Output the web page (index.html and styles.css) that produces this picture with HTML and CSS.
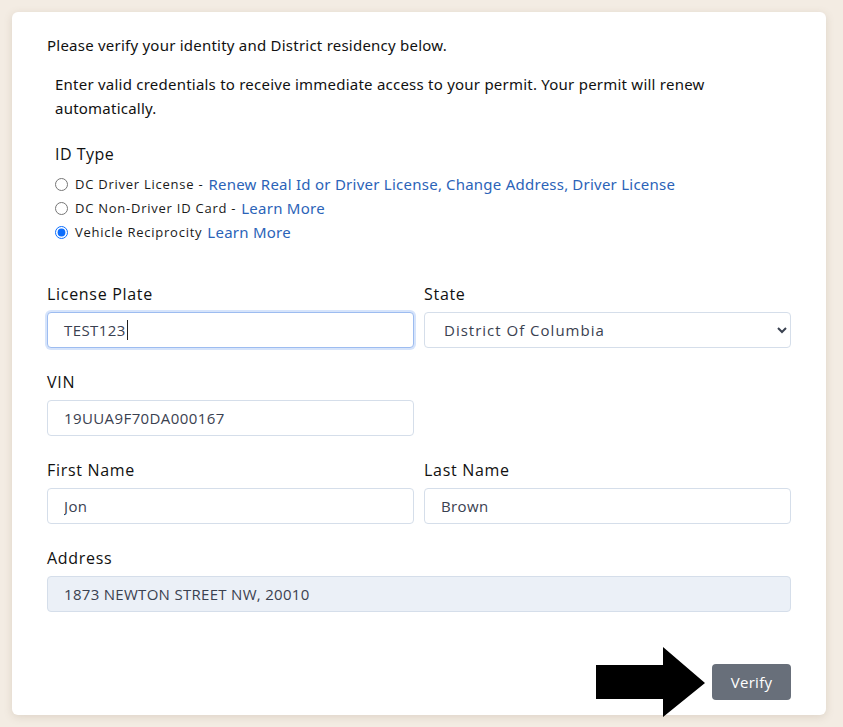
FILE: index.html
```html
<!DOCTYPE html>
<html lang="en">
<head>
<meta charset="utf-8">
<title>Verify identity</title>
<link rel="stylesheet" href="styles.css">
</head>
<body>
<main class="card">
  <p class="intro">Please verify your identity and District residency below.</p>
  <p class="note">Enter valid credentials to receive immediate access to your permit. Your permit will renew automatically.</p>

  <fieldset class="idtype">
    <legend class="idtype-title">ID Type</legend>
    <label class="radio-row">
      <input type="radio" name="idtype">
      <span class="radio-text">DC Driver License -</span>
      <a class="link" href="#">Renew Real Id or Driver License</a><span class="link-sep">,</span>
      <a class="link" href="#">Change Address</a><span class="link-sep">,</span>
      <a class="link" href="#">Driver License</a>
    </label>
    <label class="radio-row">
      <input type="radio" name="idtype">
      <span class="radio-text">DC Non-Driver ID Card -</span>
      <a class="link" href="#">Learn More</a>
    </label>
    <label class="radio-row">
      <input type="radio" name="idtype" checked>
      <span class="radio-text">Vehicle Reciprocity</span>
      <a class="link" href="#">Learn More</a>
    </label>
  </fieldset>

  <div class="form-grid">
    <div class="field">
      <label class="field-label" for="plate">License Plate</label>
      <div class="control control-focus" id="plate"><span>TEST123</span><span class="caret"></span></div>
    </div>
    <div class="field">
      <label class="field-label" for="state">State</label>
      <select class="control control-select" id="state">
        <option>District Of Columbia</option>
      </select>
    </div>
    <div class="field">
      <label class="field-label" for="vin">VIN</label>
      <input class="control" id="vin" value="19UUA9F70DA000167">
    </div>
    <div class="field"></div>
    <div class="field">
      <label class="field-label" for="first">First Name</label>
      <input class="control" id="first" value="Jon">
    </div>
    <div class="field">
      <label class="field-label" for="last">Last Name</label>
      <input class="control" id="last" value="Brown">
    </div>
    <div class="field field-wide">
      <label class="field-label" for="addr">Address</label>
      <input class="control control-disabled" id="addr" value="1873 NEWTON STREET NW, 20010" readonly>
    </div>
  </div>

  <div class="actions">
    <svg class="arrow" width="109" height="70" viewBox="0 0 109 70" aria-hidden="true">
      <polygon points="0,18 67,18 67,0 109,36 67,70 67,52 0,52" fill="#000"/>
    </svg>
    <button class="btn" type="button">Verify</button>
  </div>
</main>
</body>
</html>
```

FILE: styles.css
```css
* { box-sizing: border-box; }

html, body {
  margin: 0;
  background: #f3ece3;
}

body {
  padding: 12px 17px 12px 12px;
  font-family: "Noto Sans", "Lato", sans-serif;
  color: #111;
}

.card {
  background: #fff;
  border-radius: 6px;
  box-shadow: 0 2px 8px rgba(120, 100, 70, 0.18);
  padding: 21px 35px 15px 35px;
  min-height: 703px;
}

.intro {
  margin: 0;
  font-size: 15px;
  line-height: 24px;
  letter-spacing: 0.23px;
}

.note {
  margin: 15px 0 0 8px;
  font-size: 15px;
  line-height: 24px;
  letter-spacing: 0.23px;
  padding-right: 60px;
}

.idtype {
  border: 0;
  margin: 22px 0 0 8px;
  padding: 0;
}

.idtype-title {
  padding: 0;
  font-family: "Open Sans", sans-serif;
  font-size: 16px;
  line-height: 24px;
  letter-spacing: 0.5px;
  margin-bottom: 6px;
  color: #111;
}

.radio-row {
  display: flex;
  align-items: center;
  height: 24px;
  white-space: nowrap;
}

.radio-row input {
  margin: 0 7px 0 0;
  width: 13px;
  height: 13px;
  accent-color: #0d6efd;
}

.radio-text {
  font-family: "Open Sans", sans-serif;
  font-size: 13px;
  letter-spacing: 0.75px;
  color: #1a1a1a;
  margin-right: 5px;
}

.link {
  color: #2b63b8;
  text-decoration: none;
  font-family: "Noto Sans", sans-serif;
  font-size: 15px;
  letter-spacing: 0.25px;
}

.link-sep {
  color: #2b63b8;
  font-size: 15px;
  margin-right: 4px;
}

.form-grid {
  margin-top: 38px;
  display: grid;
  grid-template-columns: 1fr 1fr;
  column-gap: 10px;
  row-gap: 22px;
}

.field-wide {
  grid-column: 1 / -1;
}

.field-label {
  display: block;
  font-family: "Open Sans", sans-serif;
  font-size: 16px;
  letter-spacing: 0.7px;
  line-height: 24px;
  margin-bottom: 6px;
  color: #111;
}

.control {
  display: flex;
  align-items: center;
  width: 100%;
  height: 36px;
  border: 1px solid #d5deea;
  border-radius: 4px;
  background: #fff;
  padding: 0 16px;
  font-family: "Open Sans", sans-serif;
  font-size: 15px;
  letter-spacing: 0.4px;
  color: #3a4150;
  outline: none;
}

.control-focus {
  border-color: #9dbcf0;
  box-shadow: 0 0 0 2px #d6e4fb;
}

.caret {
  display: inline-block;
  width: 1px;
  height: 20px;
  background: #222;
  margin-left: 1px;
}

.control-select {
  padding-left: 15px;
  padding-right: 8px;
  letter-spacing: 1px;
}

.control-disabled {
  background: #ebf0f7;
  letter-spacing: 0.3px;
}

.actions {
  margin-top: 52px;
  height: 36px;
  display: flex;
  justify-content: flex-end;
  align-items: center;
  gap: 7px;
}

.arrow {
  display: block;
  margin: -17px 0 -17px 0;
}

.btn {
  width: 79px;
  height: 36px;
  border: 0;
  border-radius: 4px;
  background: #686f7a;
  color: #fff;
  font-family: "Open Sans", sans-serif;
  font-size: 15px;
  letter-spacing: 0.3px;
  padding: 0;
}
```
